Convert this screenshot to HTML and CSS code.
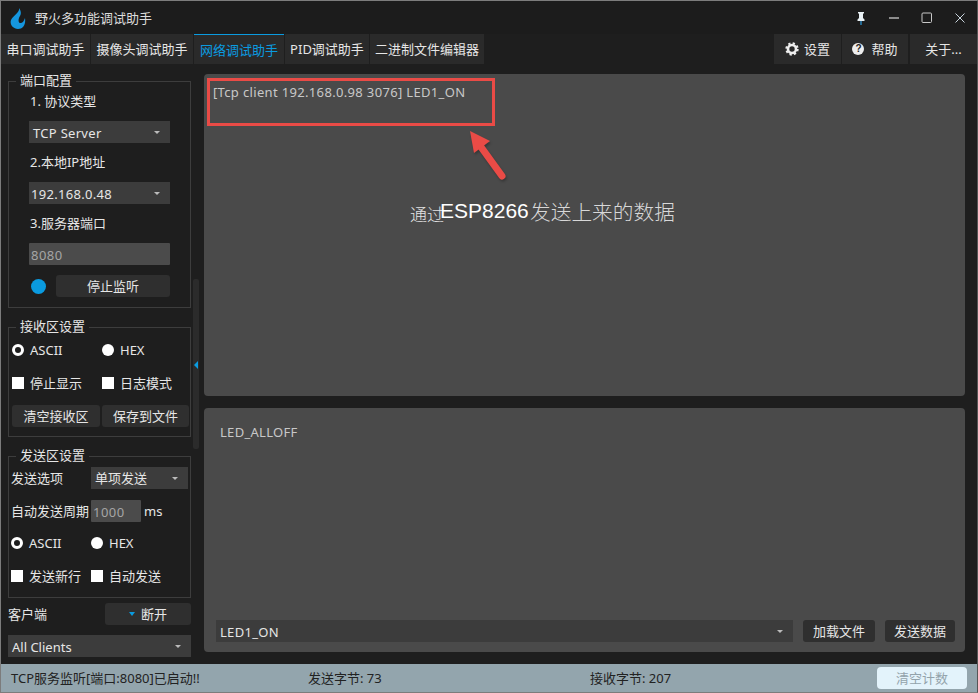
FILE: index.html
```html
<!DOCTYPE html>
<html lang="zh-CN">
<head>
<meta charset="utf-8">
<title>野火多功能调试助手</title>
<link rel="stylesheet" href="styles.css">
</head>
<body>
<div class="window">
  <header class="titlebar">
    <svg class="logo" viewBox="0 0 16 21"><path fill="#1596de" d="M9 0C10 4 4 7 1.500 11 -1 15 2 21 8 21 13 21 16 17 15 10 14 13 12.500 15 10.500 15 8 15 8 11 10 8 11.500 5.500 11 3 9 0z"/></svg>
    <span class="title">野火多功能调试助手</span>
    <div class="winctl">
      <svg viewBox="0 0 14 14"><path fill="#e8f0f4" d="M4 1h6v1.500H9V7l1.500 1.500V10H3.500V8.500L5 7V2.500H4z"/><path stroke="#2a9be0" stroke-width="1.200" d="M7 10v4"/></svg>
      <svg viewBox="0 0 14 14"><path stroke="#d8d8d8" stroke-width="1.200" d="M2 7h10"/></svg>
      <svg viewBox="0 0 14 14"><rect x="2" y="2" width="9.500" height="9.500" rx="1" fill="none" stroke="#c8c8c8"/></svg>
      <svg viewBox="0 0 14 14"><path stroke="#c8d4dc" d="M2.500 2.500l9 9M11.500 2.500l-9 9"/></svg>
    </div>
  </header>
  <nav class="tabbar">
    <a class="tab t1">串口调试助手</a>
    <a class="tab t2">摄像头调试助手</a>
    <a class="tab t3 active">网络调试助手</a>
    <a class="tab t4">PID调试助手</a>
    <a class="tab t5">二进制文件编辑器</a>
    <span class="spacer"></span>
    <a class="tab t6"><svg class="ico" viewBox="0 0 14 14"><circle cx="7" cy="7" r="4" fill="none" stroke="#eee" stroke-width="2.600"/><circle cx="7" cy="7" r="5.600" fill="none" stroke="#eee" stroke-width="2.200" stroke-dasharray="2.200 2.200"/></svg>设置</a>
    <a class="tab t7"><span class="help">?</span>帮助</a>
    <a class="tab t8">关于...</a>
  </nav>
  <main class="body">
    <aside class="side">
      <section class="group g1">
        <span class="legend">端口配置</span>
        <div class="lbl">1. 协议类型</div>
        <div class="combo c1"><span>TCP Server</span><i class="caret"></i></div>
        <div class="lbl">2.本地IP地址</div>
        <div class="combo c1 tight"><span>192.168.0.48</span><i class="caret"></i></div>
        <div class="lbl">3.服务器端口</div>
        <div class="input c1">8080</div>
        <div class="listen"><i class="dot"></i><button class="btn stop">停止监听</button></div>
      </section>
      <section class="group g2">
        <span class="legend">接收区设置</span>
        <div class="row"><label class="opt w90"><i class="radio on"></i>ASCII</label><label class="opt"><i class="radio"></i>HEX</label></div>
        <div class="row"><label class="opt w90"><i class="check"></i>停止显示</label><label class="opt"><i class="check"></i>日志模式</label></div>
        <div class="row btns"><button class="btn b88">清空接收区</button><button class="btn b87">保存到文件</button></div>
      </section>
      <section class="group g3">
        <span class="legend">发送区设置</span>
        <div class="row"><span class="fld">发送选项</span><div class="combo send"><span>单项发送</span><i class="caret"></i></div></div>
        <div class="row"><span class="fld">自动发送周期</span><div class="input period">1000</div><span class="unit">ms</span></div>
        <div class="row"><label class="opt w80"><i class="radio on"></i>ASCII</label><label class="opt"><i class="radio"></i>HEX</label></div>
        <div class="row"><label class="opt w80"><i class="check"></i>发送新行</label><label class="opt"><i class="check"></i>自动发送</label></div>
      </section>
      <div class="client"><span>客户端</span><button class="btn disc"><i class="bluecaret"></i>断开</button></div>
      <div class="combo all"><span>All Clients</span><i class="caret"></i></div>
    </aside>
    <div class="split"><div class="handle"><i class="arrowleft"></i></div></div>
    <div class="content">
      <section class="panel rx">
        <p class="rxtext">[Tcp client 192.168.0.98 3076] LED1_ON</p>
        <div class="mark"></div>
        <svg class="arrow" viewBox="0 0 50 60"><path fill="none" stroke="#ea4b46" stroke-width="7" stroke-linecap="round" d="M12 17l21 29"/><path fill="#ea4b46" d="M1 1l4 22 16-12z"/></svg>
        <p class="note"><span class="n1">通过</span><span class="n2">ESP8266</span><span class="n3">发送上来的数据</span></p>
      </section>
      <section class="panel tx">
        <p class="txtext">LED_ALLOFF</p>
        <div class="txbar">
          <div class="combo txcombo"><span>LED1_ON</span><i class="caret"></i></div>
          <button class="btn load">加载文件</button>
          <button class="btn sendbtn">发送数据</button>
        </div>
      </section>
    </div>
  </main>
  <footer class="status">
    <span class="s1">TCP服务监听[端口:8080]已启动!!</span>
    <span class="s2">发送字节: 73</span>
    <span class="s3">接收字节: 207</span>
    <button class="clear">清空计数</button>
  </footer>
</div>
</body>
</html>
```

FILE: styles.css
```css
* { box-sizing: border-box; }
html, body { margin: 0; height: 100%; overflow: hidden; background: #1e1e1e; }
body, button { font: 13px/22px "Noto Sans", "Noto Sans CJK SC", sans-serif; color: #e6e6e6; }
i { display: block; }
p { margin: 0; }

.window { width: 978px; height: 693px; border: 1px solid #7c7c7c; border-right-color: #555; display: flex; flex-direction: column; background: #1e1e1e; }

.titlebar { height: 33px; flex: none; display: flex; align-items: center; padding-left: 9px; background: #1c1c1c; }
.logo { width: 16px; height: 21px; margin-top: 2px; }
.title { margin-left: 9px; color: #dcdcdc; }
.winctl { margin-left: auto; display: flex; gap: 19px; padding-right: 10px; }
.winctl svg { width: 14px; height: 14px; }

.tabbar { height: 30px; flex: none; display: flex; gap: 1px; }
.tab { display: flex; align-items: center; justify-content: center; background: #2a2a2a; color: #e6e6e6; white-space: nowrap; }
.t1 { width: 89px; } .t2 { width: 102px; } .t3 { width: 90px; } .t4 { width: 84px; } .t5 { width: 114px; }
.t6 { width: 67px; } .t7 { width: 66px; } .t8 { width: 67px; margin-left: 1px; }
.active { color: #0a9be0; border-top: 1px solid #0a9be0; }
.spacer { flex: 1; }
.ico { width: 14px; height: 14px; margin-right: 5px; }
.help { width: 12px; height: 12px; margin-right: 7px; border-radius: 50%; background: #eee; color: #222; font: 700 10px/12px "Liberation Sans", sans-serif; text-align: center; }

.body { flex: 1; min-height: 0; display: flex; }

.side { width: 192px; flex: none; padding: 17px 0 0 7px; }
.group { position: relative; width: 183px; border: 1px solid #3d3d3d; }
.legend { position: absolute; left: 7px; top: -12px; padding: 0 4px; background: #1e1e1e; line-height: 20px; }
.g1 { height: 227px; padding: 9px 0 0 20px; }
.g2 { height: 110px; margin-top: 19px; padding: 11px 0 0 3px; }
.g3 { height: 142px; margin-top: 19px; padding: 10px 0 0 2px; }
.g3 .row:nth-of-type(2) { margin-bottom: 10px; }

.lbl { height: 22px; margin: 0 0 8px 1px; line-height: 20px; }
.c1 { width: 141px; margin-bottom: 9px; }
.combo { position: relative; height: 22px; display: flex; align-items: center; background: #3c3c3c; padding: 1px 0 0 4px; letter-spacing: .3px; }
.tight { padding-left: 2px; }
.send { padding-top: 0; letter-spacing: 0; }
.caret { position: absolute; right: 10px; top: 10px; border: 3px solid transparent; border-top: 3px solid #bbb; border-bottom: 0; }
.input { height: 22px; background: #4b4b4b; color: #a5a5a5; padding: 1px 0 0 2px; border-radius: 1px; letter-spacing: .5px; }
.listen { display: flex; align-items: center; margin-top: 10px; }
.dot { width: 15px; height: 15px; border-radius: 50%; background: #0a9be0; margin: 0 10px 0 2px; }
.btn { height: 22px; padding: 0; border: 0; border-radius: 3px; background: #2f2f2f; color: #e6e6e6; }
.stop { width: 114px; }

.row { display: flex; align-items: center; height: 22px; margin-bottom: 11px; }
.g2 .row:nth-of-type(3) { margin-bottom: 10px; }
.opt { display: flex; align-items: center; gap: 6px; }
.w90 { width: 90px; } .w80 { width: 80px; }
.radio { width: 12px; height: 12px; border-radius: 50%; background: #fff; }
.radio.on { background: #1e1e1e; border: 3px solid #fff; }
.check { width: 12px; height: 12px; background: #fff; }
.btns { gap: 2px; }
.b88 { width: 88px; } .b87 { width: 87px; }
.fld { width: 80px; white-space: nowrap; }
.send { width: 97px; }
.period { width: 50px; }
.unit { margin-left: 3px; }

.client { display: flex; align-items: center; justify-content: space-between; width: 183px; margin-top: 5px; }
.disc { width: 86px; display: flex; align-items: center; justify-content: center; gap: 6px; }
.bluecaret { border: 3px solid transparent; border-top: 4px solid #0a9be0; border-bottom: 0; }
.all { width: 183px; margin-top: 10px; letter-spacing: 0; }

.split { width: 11px; flex: none; padding: 215px 0 0 0; }
.handle { position: relative; width: 6px; height: 170px; background: #2b2b2b; border-radius: 2px; }
.arrowleft { position: absolute; left: 1px; top: 82px; border: 4px solid transparent; border-right: 4px solid #0a9be0; border-left: 0; }

.content { flex: 1; padding: 10px 12px 12px 0; display: flex; flex-direction: column; gap: 12px; }
.panel { position: relative; background: #4a4a4a; border-radius: 4px; }
.rx { height: 322px; padding: 7px 9px; }
.tx { flex: 1; display: flex; flex-direction: column; padding: 13px 10px 10px 12px; }
.rxtext { color: #c8c8c8; letter-spacing: .34px; }
.txtext { color: #c8c8c8; padding-left: 4px; letter-spacing: .3px; }
.mark { position: absolute; left: 3px; top: 4px; width: 288px; height: 48px; border: 3px solid #ea4b46; }
.arrow { position: absolute; left: 265px; top: 56px; width: 50px; height: 60px; filter: drop-shadow(1px 2px 1px rgba(0,0,0,.25)); }
.note { position: absolute; left: 206px; top: 119px; display: flex; align-items: center; white-space: nowrap; color: #e4e4e4; }
.n1 { font: 300 17px/28px "Noto Sans CJK SC", sans-serif; width: 30px; margin-top: 7px; }
.n2 { font: 21px/28px "Liberation Sans", sans-serif; color: #fff; width: 90px; }
.n3 { font: 300 20.700px/28px "Noto Sans CJK SC", sans-serif; color: #d8d8d8; }
.txbar { margin-top: auto; display: flex; }
.txcombo { width: 577px; background: #3c3c3c; }
.load { width: 72px; margin-left: 10px; }
.sendbtn { width: 70px; margin-left: 10px; }

.status { height: 28px; flex: none; display: flex; align-items: center; background: #93a5ad; color: #222; position: relative; }
.s1 { width: 307px; padding-left: 10px; }
.s2 { width: 282px; }
.s3 { width: 287px; }
.clear { width: 90px; height: 22px; padding: 0; border: 0; border-radius: 4px; background: #e3f3fb; color: #93a3ab; }
```
